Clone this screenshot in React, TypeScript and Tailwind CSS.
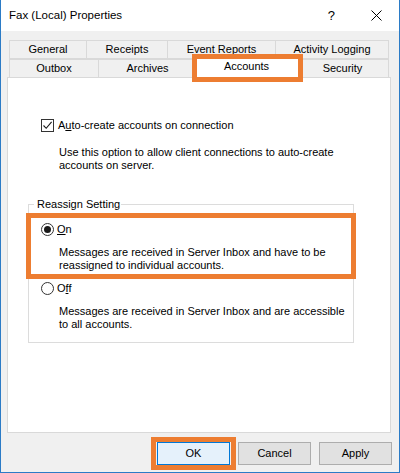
import React from "react";

const font = { fontFamily: '"Liberation Sans", Arial, sans-serif' };

function Tab({ label, w, last }: { label: string; w: number; last?: boolean }) {
  return (
    <div
      className={`flex items-center justify-center border-t border-l border-[#d9d9d9] bg-[#f0f0f0] ${last ? "border-r" : ""}`}
      style={{ width: w }}
    >
      {label}
    </div>
  );
}

function Radio({ checked }: { checked?: boolean }) {
  return (
    <div className="w-[13px] h-[13px] rounded-full border border-[#333] bg-white flex items-center justify-center">
      {checked && <div className="w-[7px] h-[7px] rounded-full bg-[#1a1a1a]" />}
    </div>
  );
}

export default function App() {
  return (
    <div
      className="w-[400px] h-[473px] flex flex-col bg-[#f0f0f0] border-x border-b border-[#2b7bc6] text-[11px] text-black leading-[13px]"
      style={font}
    >
      {/* Title bar */}
      <div className="h-[31px] bg-white flex items-center pl-[8px] shrink-0">
        <span className="text-[11.5px]">Fax (Local) Properties</span>
        <span className="ml-auto text-[13px] mr-[36px]">?</span>
        <svg width="11" height="11" viewBox="0 0 11 11" className="mr-[17px]">
          <path d="M0.5 0.5 L10.5 10.5 M10.5 0.5 L0.5 10.5" stroke="#000" strokeWidth="1" fill="none" />
        </svg>
      </div>

      {/* Tabs + panel */}
      <div className="pl-[6px] pr-[8px] pt-[9px]">
        <div className="mx-[2px]">
          <div className="flex h-[18px]">
            <Tab label="General" w={77} />
            <Tab label="Receipts" w={81} />
            <Tab label="Event Reports" w={108} />
            <Tab label="Activity Logging" w={114} last />
          </div>
          <div className="flex h-[19px] border-t border-[#d9d9d9]">
            <Tab label="Outbox" w={89} />
            <Tab label="Archives" w={98} />
            <div className="relative z-10 -mt-[4px] -mb-px -mx-[2px] w-[105px] h-[24px] bg-white border-x border-t border-[#d9d9d9] flex items-center justify-center pb-[2px]">
              Accounts
              <div className="absolute -left-[3px] -right-[5px] -top-[2px] -bottom-[3px] border-[5px] border-[#ed7d31]" />
            </div>
            <div className="flex items-center justify-center border-t border-r border-[#d9d9d9] bg-[#f0f0f0]" style={{ width: 92 }}>
              Security
            </div>
          </div>
        </div>

        <div className="h-[356px] bg-white border border-[#d9d9d9] flex flex-col">
          <div className="mt-[41px] ml-[33px] flex items-center">
            <div className="w-[13px] h-[13px] border border-[#333] bg-white flex items-center justify-center">
              <svg width="11" height="11" viewBox="0 0 11 11">
                <path d="M1.5 5.5 L4.2 8.3 L9.6 1.8" stroke="#1a1a1a" strokeWidth="1.1" fill="none" />
              </svg>
            </div>
            <span className="ml-[4px]">
              A<span className="underline">u</span>to-create accounts on connection
            </span>
          </div>
          <div className="mt-[14px] ml-[51px]">
            <div>Use this option to allow client connections to auto-create</div>
            <div>accounts on server.</div>
          </div>

          <fieldset className="mt-[26px] ml-[20px] w-[326px] h-[145px] border border-[#dcdcdc]">
            <legend className="ml-[5px] pl-[3px] pr-[1px]">Reassign Setting</legend>
            <div className="relative mt-[12px]">
              <div className="ml-[12px] flex items-center">
                <Radio checked />
                <span className="ml-[3px]">
                  <span className="underline">O</span>n
                </span>
              </div>
              <div className="mt-[10px] ml-[30px]">
                <div>Messages are received in Server Inbox and have to be</div>
                <div>reassigned to individual accounts.</div>
              </div>
              <div className="absolute -left-[3px] -right-[3px] -top-[10px] -bottom-[7px] border-[5px] border-[#ed7d31]" />
            </div>
            <div className="mt-[10px] ml-[12px] flex items-center">
              <Radio />
              <span className="ml-[3px]">
                O<span className="underline">f</span>f
              </span>
            </div>
            <div className="mt-[10px] ml-[30px]">
              <div>Messages are received in Server Inbox and are accessible</div>
              <div>to all accounts.</div>
            </div>
          </fieldset>
        </div>
      </div>

      {/* Buttons */}
      <div className="mt-[9px] flex justify-end gap-[8px] pr-[7px]">
        <div className="relative">
          <div className="w-[73px] h-[23px] bg-[#e5f1fb] border border-[#0078d7] flex items-center justify-center">
            OK
          </div>
          <div className="absolute -left-[6px] -right-[6px] -top-[5px] -bottom-[5px] border-[5px] border-[#ed7d31]" />
        </div>
        <div className="w-[73px] h-[23px] bg-[#e1e1e1] border border-[#adadad] flex items-center justify-center">
          Cancel
        </div>
        <div className="w-[73px] h-[23px] bg-[#e1e1e1] border border-[#adadad] flex items-center justify-center">
          Apply
        </div>
      </div>
    </div>
  );
}
